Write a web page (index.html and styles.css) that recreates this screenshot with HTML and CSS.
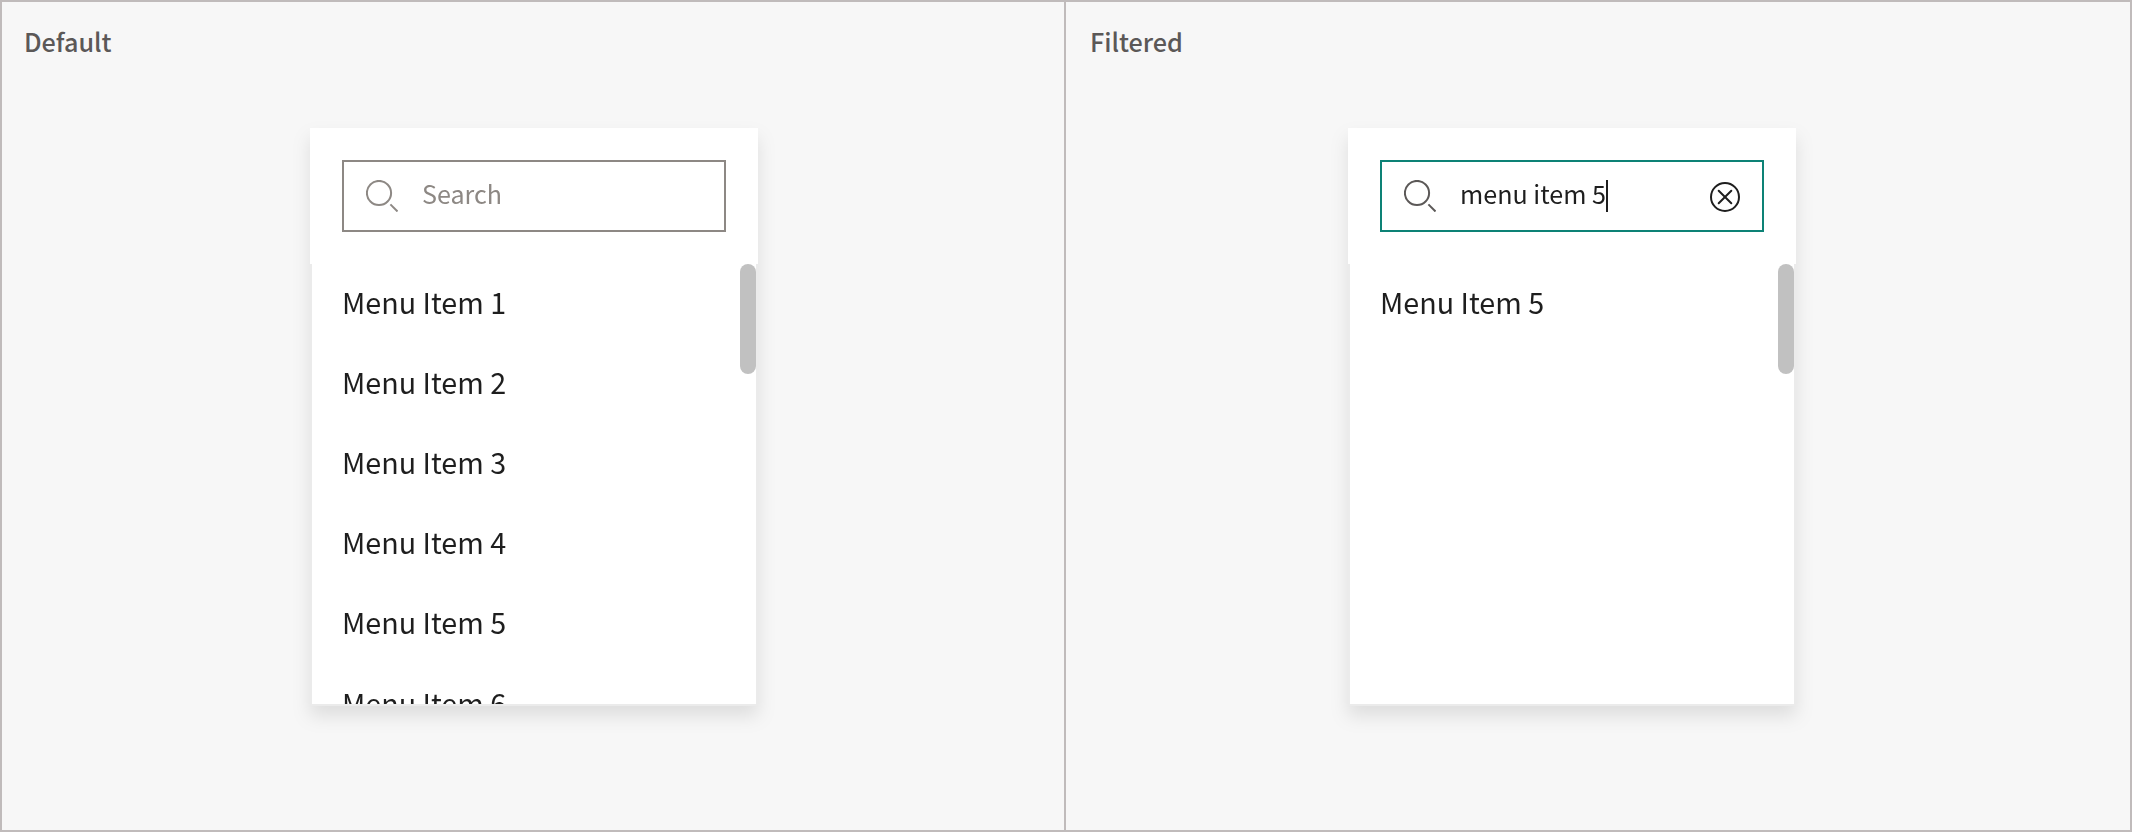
FILE: index.html
```html
<!DOCTYPE html>
<html lang="en">
<head>
<meta charset="utf-8">
<title>Menu search</title>
<link rel="stylesheet" href="styles.css">
</head>
<body>
<main class="board">
  <section class="panel">
    <h2 class="title">Default</h2>
    <div class="menu">
      <div class="menu-head">
        <div class="field">
          <svg class="search-icon" viewBox="0 0 32 32" width="32" height="32"><circle cx="13" cy="13" r="12.1"/><path d="M24.4 24.4 31.5 31.5"/></svg>
          <span class="value">Search</span>
        </div>
      </div>
      <div class="menu-body">
        <ul class="items">
          <li>Menu Item 1</li>
          <li>Menu Item 2</li>
          <li>Menu Item 3</li>
          <li>Menu Item 4</li>
          <li>Menu Item 5</li>
          <li>Menu Item 6</li>
        </ul>
        <div class="thumb"></div>
      </div>
    </div>
  </section>
  <section class="panel">
    <h2 class="title">Filtered</h2>
    <div class="menu">
      <div class="menu-head">
        <div class="field active">
          <svg class="search-icon" viewBox="0 0 32 32" width="32" height="32"><circle cx="13" cy="13" r="12.1"/><path d="M24.4 24.4 31.5 31.5"/></svg>
          <span class="value">menu item 5</span><span class="caret"></span>
          <svg class="clear-icon" viewBox="0 0 30 30" width="30" height="30"><circle cx="15" cy="15" r="14"/><path d="M8.7 8.7 21.3 21.3M21.3 8.7 8.7 21.3"/></svg>
        </div>
      </div>
      <div class="menu-body">
        <ul class="items">
          <li>Menu Item 5</li>
        </ul>
        <div class="thumb"></div>
      </div>
    </div>
  </section>
</main>
</body>
</html>
```
FILE: styles.css
```css
* { box-sizing: border-box; }

body {
  margin: 0;
  font-family: "Noto Sans CJK SC", "Noto Sans", sans-serif;
  color: #1e1e1e;
}

.board {
  display: grid;
  grid-template-columns: 1064px 1fr;
  height: 832px;
  background: #f7f7f7;
  border: 2px solid #c0bbbb;
}

.panel { padding: 19px 0 0; }
.panel:first-child { border-right: 2px solid #c0bbbb; }

.title {
  margin: 0 0 67px;
  padding-left: 22px;
  height: 40px;
  font-size: 25.2px;
  font-weight: 500;
  line-height: 40px;
  color: #5b5857;
}
.panel + .panel .title { padding-left: 24px; }

.menu {
  width: 448px;
  margin-left: 308px;
  filter: drop-shadow(0 10px 9px rgba(0, 0, 0, 0.1));
}
.panel + .panel .menu { margin-left: 282px; }

.menu-head {
  height: 136px;
  padding: 32px;
  background: #fff;
}

.field {
  display: flex;
  height: 72px;
  padding: 18px 22px;
  border: 2px solid #8d8884;
  color: #8d8884;
}
.field.active { border-color: #0d8276; color: #1e1e1e; }

.value {
  margin-left: 24px;
  font-size: 25.1px;
  line-height: 27px;
  white-space: nowrap;
}
.caret { width: 2px; height: 32px; background: #1e1e1e; }

.search-icon, .clear-icon { flex: none; fill: none; stroke-width: 2; }
.search-icon { stroke: #8d8884; }
.active .search-icon { stroke: #5b5857; }
.clear-icon { margin: 2px 0 0 auto; stroke: #1e1e1e; stroke-linecap: round; }

.menu-body {
  display: flex;
  justify-content: space-between;
  height: 442px;
  border: 2px solid #ebebeb;
  border-top: 0;
  background: #fff;
  overflow: hidden;
}

.items {
  margin: 0;
  padding: 0 0 0 30px;
  list-style: none;
  font-size: 28.7px;
  line-height: 76px;
}
.items li { height: 80px; }
.items li:nth-child(6) { padding-top: 1px; }

.thumb {
  width: 16px;
  height: 110px;
  border-radius: 8px;
  background: #c1c1c1;
}
```
